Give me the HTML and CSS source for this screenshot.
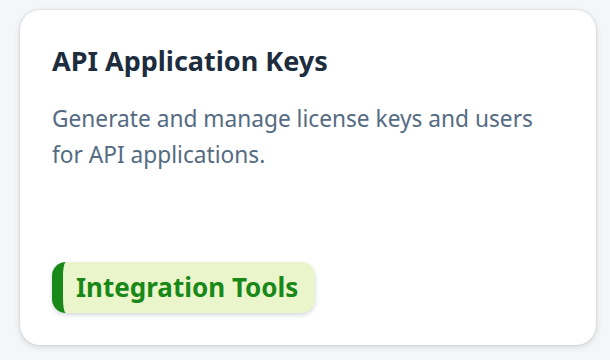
FILE: index.html
```html
<!DOCTYPE html>
<html lang="en">
<head>
  <meta charset="UTF-8" />
  <title>API Application Keys</title>
  <link rel="stylesheet" href="styles.css">
</head>
<body>
  <div class="tile">
    <h2 class="tile-title">API Application Keys</h2>
    <p class="tile-text">Generate and manage license keys and users for API applications.</p>
    <span class="tag">Integration Tools</span>
  </div>
</body>
</html>
```

FILE: styles.css
```css
body {
  margin: 0;
  font-family: 'Noto Sans', sans-serif;
  background: #f5f6f7;
  padding: 10px 14px 15px 20px;
}

.tile {
  box-sizing: border-box;
  width: 576px;
  height: 335px;
  background: #fff;
  border-radius: 20px;
  box-shadow: 0 0 2px rgba(34, 53, 72, 0.2), 0 2px 6px rgba(34, 53, 72, 0.15);
  padding: 35px 40px 32px 32px;
  display: flex;
  flex-direction: column;
  align-items: flex-start;
}

.tile-title {
  margin: 0;
  font-size: 27px;
  font-weight: 700;
  color: #1d2d3e;
  line-height: 32px;
}

.tile-text {
  margin: 24px 0 0;
  font-size: 22.7px;
  line-height: 36px;
  color: #556b82;
}

.tag {
  margin-top: auto;
  display: inline-block;
  padding: 8px 17px 8px 13px;
  font-size: 26px;
  font-weight: 700;
  line-height: 35px;
  color: #188918;
  background: #ebf5cb;
  border-left: 11px solid #188918;
  border-radius: 14px;
  box-shadow: 0 2px 4px rgba(34, 53, 72, 0.2);
}
```
